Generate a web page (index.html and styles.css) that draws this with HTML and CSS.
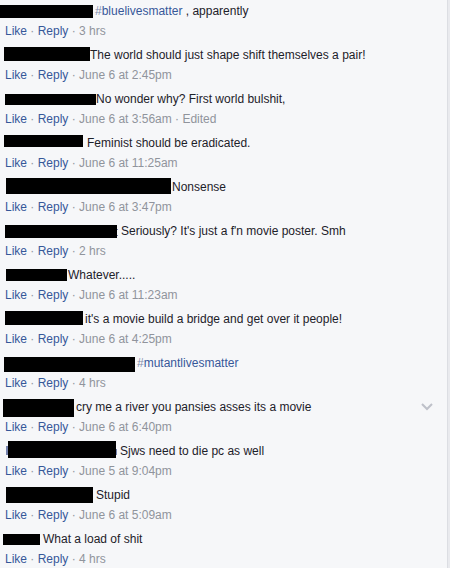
FILE: index.html
```html
<!DOCTYPE html>
<html lang="en">
<head>
<meta charset="utf-8">
<meta name="viewport" content="width=device-width, initial-scale=1">
<title>Comments</title>
<link rel="stylesheet" href="styles.css">
</head>
<body>
<main class="comments">
  <article class="comment">
    <p class="body"><svg class="name" width="95" height="20" aria-hidden="true"><rect y="4" width="93" height="13"/></svg><span><a class="tag" href="#"><span class="hash">#</span>bluelivesmatter</a> , apparently</span></p>
    <p class="meta"><a href="#">Like</a> · <a href="#">Reply</a> · 3 hrs</p>
  </article>
  <article class="comment">
    <p class="body"><svg class="name" width="90" height="20" aria-hidden="true"><rect x="4" y="2" width="86" height="14"/></svg><span>The world should just shape shift themselves a pair!</span></p>
    <p class="meta"><a href="#">Like</a> · <a href="#">Reply</a> · June 6 at 2:45pm</p>
  </article>
  <article class="comment">
    <p class="body"><svg class="name" width="96" height="20" aria-hidden="true"><rect x="5" y="5" width="91" height="11"/></svg><span>No wonder why? First world bulshit,</span></p>
    <p class="meta"><a href="#">Like</a> · <a href="#">Reply</a> · June 6 at 3:56am · Edited</p>
  </article>
  <article class="comment">
    <p class="body"><svg class="name" width="87" height="20" aria-hidden="true"><rect x="4" y="2" width="79" height="12"/></svg><span>Feminist should be eradicated.</span></p>
    <p class="meta"><a href="#">Like</a> · <a href="#">Reply</a> · June 6 at 11:25am</p>
  </article>
  <article class="comment">
    <p class="body"><svg class="name" width="172" height="20" aria-hidden="true"><rect x="6" y="1" width="165" height="16"/></svg><span>Nonsense</span></p>
    <p class="meta"><a href="#">Like</a> · <a href="#">Reply</a> · June 6 at 3:47pm</p>
  </article>
  <article class="comment">
    <p class="body"><svg class="name" width="121" height="20" aria-hidden="true"><rect x="5" y="4" width="112" height="13"/><path class="trace" d="M117 8h1v1h-1zM117 14h1v1h-1z"/></svg><span>Seriously? It's just a f'n movie poster. Smh</span></p>
    <p class="meta"><a href="#">Like</a> · <a href="#">Reply</a> · 2 hrs</p>
  </article>
  <article class="comment">
    <p class="body"><svg class="name" width="68" height="20" aria-hidden="true"><rect x="6" y="4" width="61" height="12"/></svg><span>Whatever.....</span></p>
    <p class="meta"><a href="#">Like</a> · <a href="#">Reply</a> · June 6 at 11:23am</p>
  </article>
  <article class="comment">
    <p class="body"><svg class="name" width="85" height="20" aria-hidden="true"><rect x="5" y="2" width="78" height="14"/></svg><span>it's a movie build a bridge and get over it people!</span></p>
    <p class="meta"><a href="#">Like</a> · <a href="#">Reply</a> · June 6 at 4:25pm</p>
  </article>
  <article class="comment">
    <p class="body"><svg class="name" width="137" height="20" aria-hidden="true"><rect x="4" y="4" width="131" height="15"/></svg><span><a class="tag" href="#"><span class="hash">#</span>mutantlivesmatter</a></span></p>
    <p class="meta"><a href="#">Like</a> · <a href="#">Reply</a> · 4 hrs</p>
  </article>
  <article class="comment">
    <p class="body"><svg class="name" width="76" height="20" aria-hidden="true"><rect x="3" y="2" width="71" height="18"/></svg><span>cry me a river you pansies asses its a movie</span><button class="more" type="button" aria-label="Comment options"><svg width="12" height="8" viewBox="0 0 12 8" aria-hidden="true"><path d="M1 1l5 5 5-5"/></svg></button></p>
    <p class="meta"><a href="#">Like</a> · <a href="#">Reply</a> · June 6 at 6:40pm</p>
  </article>
  <article class="comment">
    <p class="body"><svg class="name" width="120" height="20" aria-hidden="true"><path class="trace" d="M6 5h2v9h-2zM116 8h1v6h-1z"/><rect x="8" width="108" height="17"/></svg><span>Sjws need to die pc as well</span></p>
    <p class="meta"><a href="#">Like</a> · <a href="#">Reply</a> · June 5 at 9:04pm</p>
  </article>
  <article class="comment">
    <p class="body"><svg class="name" width="96" height="20" aria-hidden="true"><rect x="6" y="2" width="87" height="16"/></svg><span>Stupid</span></p>
    <p class="meta"><a href="#">Like</a> · <a href="#">Reply</a> · June 6 at 5:09am</p>
  </article>
  <article class="comment">
    <p class="body"><svg class="name" width="43" height="20" aria-hidden="true"><rect x="3" y="5" width="37" height="11"/></svg><span>What a load of shit</span></p>
    <p class="meta"><a href="#">Like</a> · <a href="#">Reply</a> · 4 hrs</p>
  </article>
</main>
</body>
</html>
```
FILE: styles.css
```css
* {
  box-sizing: border-box;
}

body {
  margin: 0;
  background: #e9eaee;
  color: #1d2129;
  font: 12px/20px "Liberation Sans", Arial, sans-serif;
}

.comments {
  display: flex;
  flex-direction: column;
  gap: 5px;
  min-height: 100vh;
  margin-right: 2px;
  padding-top: 1px;
  border-right: 1px solid #dcdee3;
  background: #f6f7f9;
}

p {
  margin: 0;
}

a {
  color: #365899;
  text-decoration: none;
}

a:hover {
  text-decoration: underline;
}

.body {
  display: flex;
  align-items: center;
}

.name {
  flex: none;
}

.trace {
  fill: #7683ae;
}

.hash {
  color: #7f8cab;
}

.meta {
  margin-top: 1px;
  padding-left: 5px;
  color: #90949c;
  line-height: 18px;
}

.more {
  display: flex;
  margin: 0 14px 0 auto;
  padding: 0;
  border: 0;
  background: none;
  cursor: pointer;
}

.more path {
  fill: none;
  stroke: #bec1c9;
  stroke-width: 2;
}
```
